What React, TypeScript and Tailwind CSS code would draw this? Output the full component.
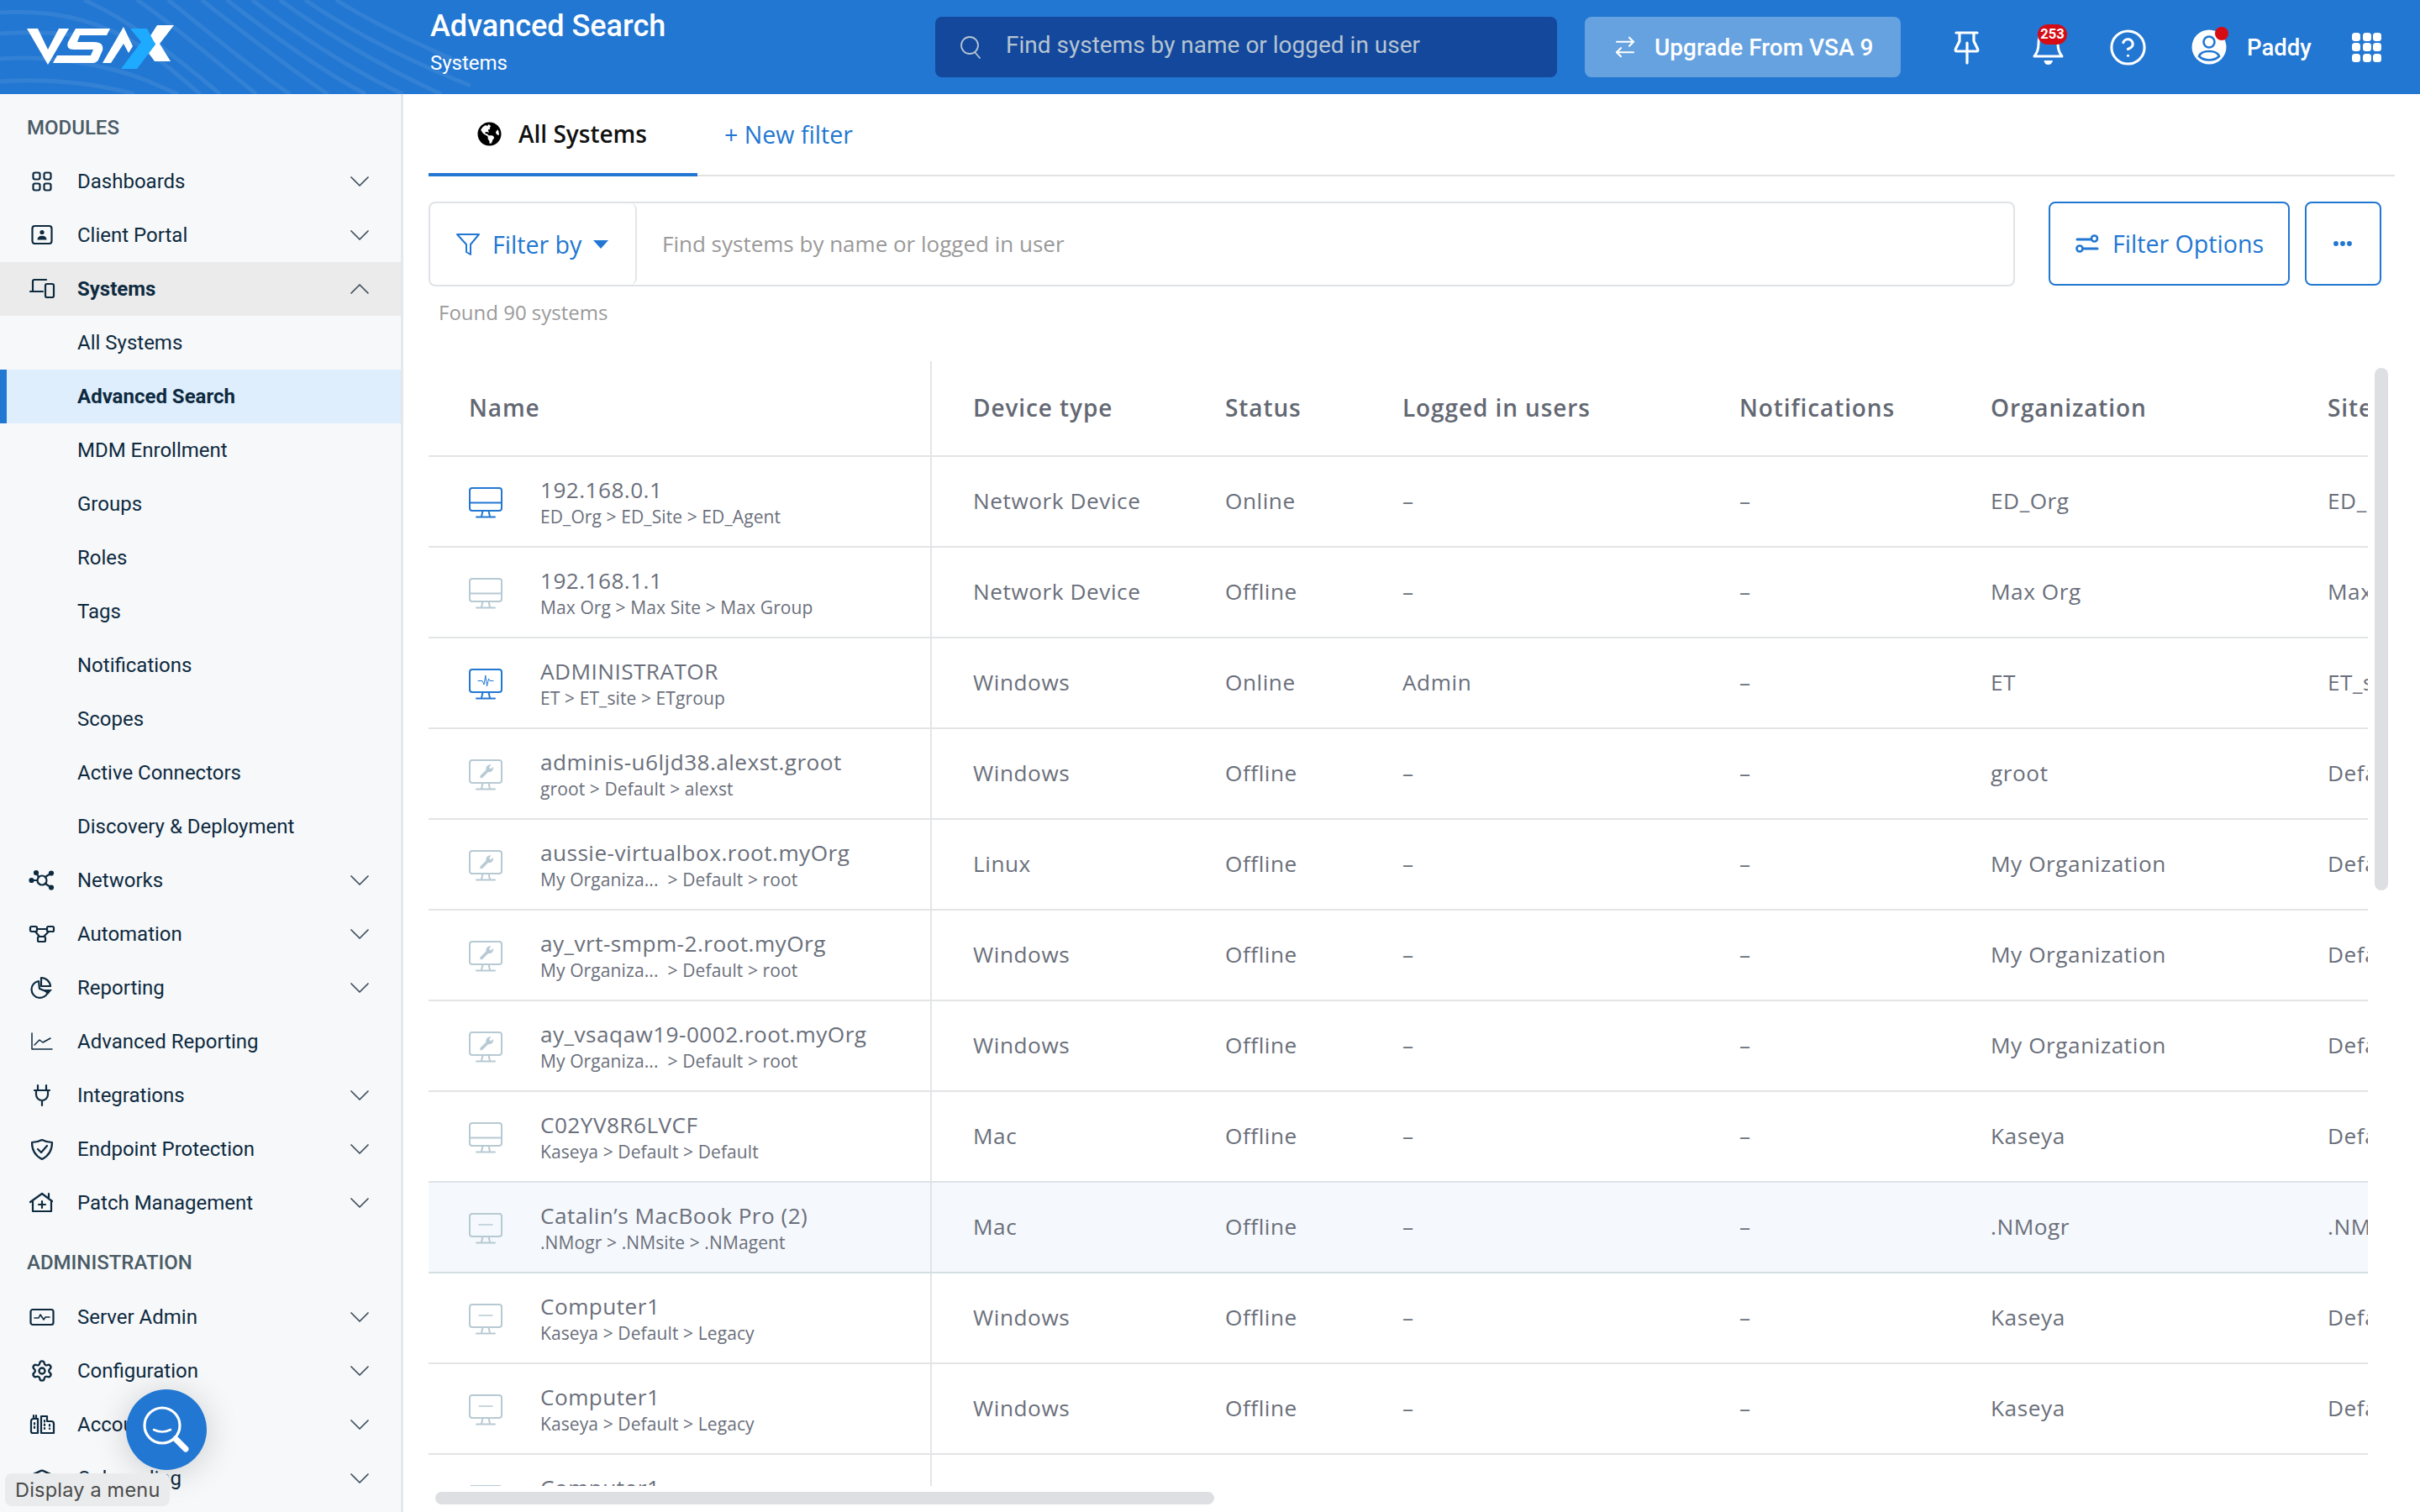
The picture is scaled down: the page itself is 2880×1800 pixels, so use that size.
import React from "react";
import { ArrowRightLeft, CircleHelp, Settings, GraduationCap } from "lucide-react";
import { FaGlobeAmericas } from "react-icons/fa";

function Logo() {
  return (
    <svg className="absolute left-0 top-0" width="560" height="112" viewBox="0 0 560 112" fill="none">
      <g stroke="#ffffff" strokeOpacity="0.08" strokeWidth="5" fill="none">
        <path d="M0 15 C60 11 115 22 167 55 C195 74 215 92 238 112" />
        <path d="M0 40 C30 38 60 38 90 42" />
        <path d="M0 70 C60 66 125 76 175 96 C190 103 200 107 212 112" />
        <path d="M0 97 C50 93 110 98 160 112" />
        <path d="M100 0 C150 22 200 60 262 112" />
        <path d="M163 0 C205 28 255 72 305 112" />
        <path d="M200 0 C245 35 290 75 345 112" />
        <path d="M240 0 C285 35 335 75 390 112" />
        <path d="M270 0 C315 35 375 80 435 112" />
        <path d="M300 0 C350 38 420 85 480 112" />
        <path d="M333 0 C385 38 455 80 525 112" />
        <path d="M363 0 C415 35 485 72 560 102" />
        <path d="M400 0 C440 25 490 50 560 80" />
      </g>
      <g fill="#ffffff">
        <path d="M32 34 H45 L57 59 L70 34 H82 L57 77 Z" />
        <path d="M90 34 H131 L127 42 H95 L92 50 H112 Q124 50 122 60 L118 69 Q116 75 110 75 H63 L68 66 H108 L111 59 H88 Q78 59 81 50 Z" />
        <path d="M122 75 L147 32 L158 55 L153 63 L147 52 L132 75 Z" />
        <path d="M187 30 H207 L190 52 L203 73 H184 L176 62 L185 52 L178 44 Z" />
      </g>
      <path d="M155 34 H175 L185 53 L163 82 H144 L168 50 Z" fill="#1eaaff" />
    </svg>
  );
}

function Ic({ children, fill = "none" }: { children: React.ReactNode; fill?: string }) {
  return (
    <svg width="32" height="32" viewBox="0 0 32 32" fill={fill} stroke="#0e2a3f" strokeWidth="2.2" strokeLinecap="round" strokeLinejoin="round">
      {children}
    </svg>
  );
}

const icons: Record<string, React.ReactNode> = {
  dash: (
    <Ic>
      <rect x="5.5" y="5.5" width="8" height="8" rx="2.2" />
      <rect x="18.5" y="5.5" width="8" height="8" rx="2.2" />
      <rect x="5.5" y="18.5" width="8" height="8" rx="2.2" />
      <rect x="18.5" y="18.5" width="8" height="8" rx="2.2" />
    </Ic>
  ),
  client: (
    <Ic>
      <rect x="4.5" y="5" width="23" height="21" rx="3" />
      <circle cx="16" cy="12.5" r="2.6" fill="#0e2a3f" stroke="none" />
      <path d="M10.5 21.5 Q10.5 16.8 16 16.8 Q21.5 16.8 21.5 21.5 Z" fill="#0e2a3f" stroke="none" />
    </Ic>
  ),
  systems: (
    <Ic>
      <path d="M21 5 H7 Q5 5 5 7 V19 M2 19 H17" />
      <rect x="20" y="10" width="10" height="16" rx="2" />
    </Ic>
  ),
  networks: (
    <Ic>
      <circle cx="16" cy="16" r="5.5" />
      <path d="M5 16 H10.5 M12 12 L9 7 M20 12 L26 8 M20 20 L26 24" />
      <circle cx="3.5" cy="16" r="2" fill="#0e2a3f" />
      <circle cx="9" cy="7" r="2" fill="#0e2a3f" />
      <circle cx="27" cy="7.5" r="2" fill="#0e2a3f" />
      <circle cx="27" cy="24.5" r="2" fill="#0e2a3f" />
    </Ic>
  ),
  auto: (
    <Ic>
      <rect x="2" y="7" width="8" height="6" rx="1.5" />
      <rect x="22" y="7" width="8" height="6" rx="1.5" />
      <rect x="11" y="19" width="9" height="6" rx="1.5" />
      <path d="M10 10 H22 M8 13 L13 19 M24 13 L18 19" />
    </Ic>
  ),
  report: (
    <Ic>
      <path d="M12 8 A10 10 0 1 0 23 21 L13 17 Z" />
      <path d="M15 4 A11 11 0 0 1 26 14 H15 Z" />
      <path d="M17 18 H28 L23 24 Z" fill="#0e2a3f" stroke="none" />
    </Ic>
  ),
  adv: (
    <svg width="32" height="32" viewBox="0 0 32 32" fill="none" stroke="#0e2a3f" strokeWidth="1.5" strokeLinecap="round" strokeLinejoin="round">
      <path d="M4 6 V25 H28 M7 20 L13 14 L17 17 L26 12" />
    </svg>
  ),
  integ: (
    <Ic>
      <path d="M11 4 V9 M21 4 V9 M7 10 H25 M9 10 V15 A7 7 0 0 0 23 15 V10 M16 22 V28" />
    </Ic>
  ),
  endpoint: (
    <Ic>
      <path d="M16 5 Q22 8 28 8 Q28 22 16 28 Q4 22 4 8 Q10 8 16 5 Z" />
      <path d="M11 16 L15 20 L22 12" />
    </Ic>
  ),
  patch: (
    <Ic>
      <path d="M2 15 L16 5 L28 14 M5 14 V26 H27 V14 M24 5 V11" />
      <path d="M12 18 H20 M16 14 V22" />
    </Ic>
  ),
  server: (
    <Ic>
      <rect x="2.5" y="7" width="27" height="18" rx="2.5" />
      <path d="M7 17 H12 L14 13 L18 19 L20 16 H25" strokeWidth="1.6" />
    </Ic>
  ),
  config: <Settings size={28} color="#0e2a3f" strokeWidth={2} />,
  accounts: (
    <Ic>
      <path d="M3 12 Q3 9 6 9 H11 V26 H5 Q3 26 3 24 Z M6 5 V9 M9 5 V9" />
      <path d="M15 6 H22 V12 H27 Q30 12 30 15 V26 H15 Z" />
      <path d="M7 14 V21 M19 11 V21 M25 16 V21" strokeDasharray="1.5 3" />
    </Ic>
  ),
  onboard: <GraduationCap size={32} color="#0e2a3f" strokeWidth={1.8} />,
};

function Chevron({ up }: { up?: boolean }) {
  return (
    <svg className="ml-auto mr-[38px] shrink-0" width="22" height="12" viewBox="0 0 22 12" fill="none" stroke="#3f4f5c" strokeWidth="1.7" strokeLinecap="round" strokeLinejoin="round">
      <path d={up ? "M1 11 L11 1 L21 11" : "M1 1 L11 11 L21 1"} />
    </svg>
  );
}

function NavItem({ label, icon, chevron, up }: { label: string; icon: string; chevron?: boolean; up?: boolean }) {
  return (
    <div className={`flex h-16 items-center pl-[34px] text-[24px] text-[#0e2a3f] ${up ? "bg-[#ebebeb] font-bold" : ""}`}>
      <span className="flex h-8 w-8 shrink-0 items-center justify-center">{icons[icon]}</span>
      <span className="ml-[26px] whitespace-nowrap">{label}</span>
      {chevron ? <Chevron up={up} /> : null}
    </div>
  );
}

function SubItem({ label, active }: { label: string; active?: boolean }) {
  return (
    <div className={`flex h-16 items-center text-[24px] text-[#0e2a3f] ${active ? "border-l-[8px] border-[#2277d2] bg-[#deeefc] pl-[84px] font-bold" : "pl-[92px]"}`}>
      {label}
    </div>
  );
}

function Monitor({ kind, on }: { kind: string; on?: boolean }) {
  const c = on ? "#2277d2" : "#b7cad3";
  return (
    <svg className="mt-[3px]" width="40" height="38" viewBox="0 0 40 38" fill="none" stroke={c} strokeWidth="2" strokeLinecap="round" strokeLinejoin="round">
      <rect x="1" y="1" width="38" height="27" rx="3" />
      <path d="M16.5 28 L15 35 M23.5 28 L25 35 M9 35.5 H31" />
      {kind === "net" ? <path d="M1 18.5 H39" /> : null}
      {kind === "dash" ? <path d="M12 14 H28" strokeWidth="1.4" /> : null}
      {kind === "pulse" ? <path d="M11 14.5 H16 L18 19 L19.8 8 L21.5 21 L23.5 12 L25 14.5 H29" strokeWidth="1" /> : null}
      {kind === "wrench" ? (
        <path d="M26.5 6.5 A5 5 0 0 0 20.5 12.5 L13.5 19.5 A1.8 1.8 0 0 0 16 22 L23 15 A5 5 0 0 0 29 9 L26 11.5 L24 9.5 Z" fill={c} stroke="none" />
      ) : null}
    </svg>
  );
}

type Row = { n: string; p: string; d: string; s: string; u: string; o: string; site: string; k: string; on?: boolean; hover?: boolean; before?: boolean };

const rows: Row[] = [
  { n: "192.168.0.1", p: "ED_Org > ED_Site > ED_Agent", d: "Network Device", s: "Online", u: "–", o: "ED_Org", site: "ED_Site", k: "net", on: true },
  { n: "192.168.1.1", p: "Max Org > Max Site > Max Group", d: "Network Device", s: "Offline", u: "–", o: "Max Org", site: "Max Site", k: "net" },
  { n: "ADMINISTRATOR", p: "ET > ET_site > ETgroup", d: "Windows", s: "Online", u: "Admin", o: "ET", site: "ET_site", k: "pulse", on: true },
  { n: "adminis-u6ljd38.alexst.groot", p: "groot > Default > alexst", d: "Windows", s: "Offline", u: "–", o: "groot", site: "Default", k: "wrench" },
  { n: "aussie-virtualbox.root.myOrg", p: "My Organiza...  > Default > root", d: "Linux", s: "Offline", u: "–", o: "My Organization", site: "Default", k: "wrench" },
  { n: "ay_vrt-smpm-2.root.myOrg", p: "My Organiza...  > Default > root", d: "Windows", s: "Offline", u: "–", o: "My Organization", site: "Default", k: "wrench" },
  { n: "ay_vsaqaw19-0002.root.myOrg", p: "My Organiza...  > Default > root", d: "Windows", s: "Offline", u: "–", o: "My Organization", site: "Default", k: "wrench" },
  { n: "C02YV8R6LVCF", p: "Kaseya > Default > Default", d: "Mac", s: "Offline", u: "–", o: "Kaseya", site: "Default", k: "net", before: true },
  { n: "Catalin’s MacBook Pro (2)", p: ".NMogr > .NMsite > .NMagent", d: "Mac", s: "Offline", u: "–", o: ".NMogr", site: ".NMsite", k: "dash", hover: true },
  { n: "Computer1", p: "Kaseya > Default > Legacy", d: "Windows", s: "Offline", u: "–", o: "Kaseya", site: "Default", k: "dash" },
  { n: "Computer1", p: "Kaseya > Default > Legacy", d: "Windows", s: "Offline", u: "–", o: "Kaseya", site: "Default", k: "dash" },
  { n: "Computer1", p: "Kaseya > Default > Legacy", d: "Windows", s: "Offline", u: "–", o: "Kaseya", site: "Default", k: "dash" },
];

const gridCols = "grid-cols-[599px_349px_211px_401px_299px_401px_200px]";

function TableRow({ r }: { r: Row }) {
  return (
    <div className={`grid h-[108px] w-[2460px] ${gridCols} items-stretch border-b-2 text-[26.2px] tracking-[0.55px] text-[#6a6f7b] ${r.hover ? "border-[#d3dfe3] bg-[#f5f8fc]" : r.before ? "border-[#dde3e6]" : "border-[#e3e4e6]"}`}>
      <div className="flex items-center border-r-2 border-[#e3e4e6] pl-[48px]">
        <Monitor kind={r.k} on={r.on} />
        <div className="ml-[45px] mt-[4px] whitespace-nowrap">
          <div className="h-[32px] leading-[32px] tracking-[0.45px]">{r.n}</div>
          <div className="h-[32px] text-[21px] leading-[32px] tracking-[0.1px] whitespace-pre">{r.p}</div>
        </div>
      </div>
      <div className="flex items-center pl-[49px]">{r.d}</div>
      <div className="flex items-center">{r.s}</div>
      <div className="flex items-center">{r.u}</div>
      <div className="flex items-center">–</div>
      <div className="flex items-center">{r.o}</div>
      <div className="flex items-center whitespace-nowrap">{r.site}</div>
    </div>
  );
}

export default function App() {
  return (
    <div className="relative flex h-[1800px] w-[2880px] flex-col overflow-hidden bg-white [font-family:Roboto,sans-serif]">
      <header className="relative flex h-[112px] shrink-0 items-center bg-[#2277d2] text-white">
        <Logo />
        <div className="relative ml-[512px] w-[601px] shrink-0 self-start pt-[9px]">
          <div className="text-[36px] font-medium leading-[44px]">Advanced Search</div>
          <div className="mt-[7px] text-[24px] leading-[30px]">Systems</div>
        </div>
        <div className="relative flex h-[72px] w-[740px] shrink-0 items-center rounded-[8px] bg-[#13489c] pl-[30px] text-[#b6c4d2]">
          <svg width="24" height="28" viewBox="0 0 24 28" fill="none" stroke="#b6c4d2" strokeWidth="1.8" strokeLinecap="round">
            <circle cx="11" cy="12" r="10" />
            <path d="M17 20 L23 27" />
          </svg>
          <span className="ml-[30px] -mt-[4px] text-[28px]">Find systems by name or logged in user</span>
        </div>
        <div className="relative ml-[33px] flex h-[72px] w-[376px] shrink-0 items-center rounded-[8px] bg-[#66a2e0] pl-[33px]">
          <ArrowRightLeft size={30} strokeWidth={1.7} color="#ffffff" />
          <span className="ml-[20px] mt-[2px] text-[28px] font-medium whitespace-nowrap">Upgrade From VSA 9</span>
        </div>
        <div className="relative ml-[55px] h-12 w-12 shrink-0">
          <svg width="48" height="48" viewBox="0 0 48 48" fill="none" stroke="#ffffff" strokeWidth="3.2" strokeLinecap="round" strokeLinejoin="round">
            <path d="M11 7 H36 M15 7 V17 L11 25 Q9 29 12 29 H35 Q38 29 36 25 L32 17 V7 M24 19 V43" />
          </svg>
        </div>
        <div className="relative ml-[48px] h-12 w-12 shrink-0">
          <svg width="48" height="48" viewBox="0 0 48 48" fill="none" stroke="#ffffff" strokeWidth="3" strokeLinejoin="round">
            <path d="M8 35 Q13 29 13 20 Q13 6 24.5 6 Q36 6 36 20 Q36 29 41 35 Z" />
            <path d="M19.5 40 H30 Q29 45 24.5 45 Q20 45 19.5 40 Z" fill="#ffffff" stroke="none" />
          </svg>
          <span className="absolute left-[12px] top-[-3px] flex h-[24px] w-[35px] items-center justify-center rounded-full bg-[#d60b14] text-[16.5px] font-bold">253</span>
        </div>
        <div className="relative ml-[47px] flex h-12 w-12 shrink-0 items-center justify-center">
          <CircleHelp size={47} strokeWidth={1.55} color="#ffffff" />
        </div>
        <div className="relative ml-[49px] flex h-12 w-12 shrink-0 items-center justify-center">
          <svg width="42" height="42" viewBox="0 0 42 42" fill="none">
            <circle cx="21" cy="21" r="20.5" fill="#ffffff" />
            <circle cx="21" cy="15" r="6.5" fill="#ffffff" stroke="#2277d2" strokeWidth="2.6" />
            <path d="M9 32 C12 24 30 24 33 32 C27 38 15 38 9 32 Z" fill="#ffffff" stroke="#2277d2" strokeWidth="2.6" />
          </svg>
          <span className="absolute left-[31px] top-0 h-[16px] w-[16px] rounded-full bg-[#d60b14]" />
        </div>
        <span className="relative ml-[21px] mt-[2px] w-[78px] shrink-0 text-[27.5px] font-medium">Paddy</span>
        <div className="relative ml-[47px] grid shrink-0 grid-cols-3 gap-[2.5px]">
          {Array.from({ length: 9 }).map((_, i) => (
            <span key={i} className="h-[10px] w-[10px] rounded-[3.5px] bg-white" />
          ))}
        </div>
      </header>

      <div className="flex min-h-0 flex-1">
        <aside className="w-[480px] shrink-0 overflow-hidden border-r-[3px] border-[#e4e7eb] bg-[#f6f8fa]">
          <div className="flex h-[72px] items-center pl-[32px] pt-[8px] text-[24px] font-medium text-[#4a5b66]">MODULES</div>
          <NavItem label="Dashboards" icon="dash" chevron />
          <NavItem label="Client Portal" icon="client" chevron />
          <NavItem label="Systems" icon="systems" chevron up />
          <SubItem label="All Systems" />
          <SubItem label="Advanced Search" active />
          <SubItem label="MDM Enrollment" />
          <SubItem label="Groups" />
          <SubItem label="Roles" />
          <SubItem label="Tags" />
          <SubItem label="Notifications" />
          <SubItem label="Scopes" />
          <SubItem label="Active Connectors" />
          <SubItem label="Discovery & Deployment" />
          <NavItem label="Networks" icon="networks" chevron />
          <NavItem label="Automation" icon="auto" chevron />
          <NavItem label="Reporting" icon="report" chevron />
          <NavItem label="Advanced Reporting" icon="adv" />
          <NavItem label="Integrations" icon="integ" chevron />
          <NavItem label="Endpoint Protection" icon="endpoint" chevron />
          <NavItem label="Patch Management" icon="patch" chevron />
          <div className="flex h-[72px] items-center pl-[32px] pt-[6px] text-[24px] font-medium text-[#4a5b66]">ADMINISTRATION</div>
          <NavItem label="Server Admin" icon="server" chevron />
          <NavItem label="Configuration" icon="config" chevron />
          <NavItem label="Accounts" icon="accounts" chevron />
          <NavItem label="Onboarding" icon="onboard" chevron />
        </aside>

        <main className="min-w-0 flex-1 pl-[30px] [font-family:'Open_Sans',sans-serif]">
          <div className="mr-[30px] flex h-[98px] items-stretch border-b-2 border-[#e2e2e2]">
            <div className="flex h-[98px] w-[320px] items-center border-b-4 border-[#2277d2] pl-[58px]">
              <FaGlobeAmericas size={29} color="#000000" />
              <span className="ml-[20px] text-[28px] font-semibold text-[#111111]">All Systems</span>
            </div>
            <div className="ml-[32px] flex items-center text-[28.6px] font-medium text-[#2277d2]">+ New filter</div>
          </div>

          <div className="mt-[30px] flex h-[101px] items-stretch">
            <div className="flex w-[1888px] items-stretch rounded-[8px] border-2 border-[#dfe2e6]">
              <div className="flex w-[246px] items-center rounded-[8px] border-r-2 border-[#e3e5e9] pl-[30px] text-[#2277d2]">
                <svg width="30" height="30" viewBox="0 0 30 30" fill="none" stroke="#2277d2" strokeWidth="2" strokeLinejoin="round">
                  <path d="M2 3 H28 L18 15 V27 L13 24 V15 Z" />
                </svg>
                <span className="ml-[14px] mt-[2px] text-[28.6px] font-medium">Filter by</span>
                <svg className="ml-[13px]" width="20" height="12" viewBox="0 0 20 12" fill="#2277d2">
                  <path d="M1 1 H19 L10 11 Z" />
                </svg>
              </div>
              <div className="flex items-center pl-[30px] text-[26px] text-[#999999]">Find systems by name or logged in user</div>
            </div>
            <div className="ml-[40px] flex h-[100px] w-[287px] items-center rounded-[8px] border-2 border-[#2277d2] pl-[30px] text-[#2277d2]">
              <svg width="28" height="22" viewBox="0 0 28 22" fill="none" stroke="#2277d2" strokeWidth="3" strokeLinecap="round">
                <path d="M2 6 H18 M10 17 H26" />
                <circle cx="22.5" cy="5" r="3.5" strokeWidth="2.6" />
                <circle cx="5" cy="17" r="3.5" strokeWidth="2.6" />
              </svg>
              <span className="ml-[16px] text-[28.6px] font-medium">Filter Options</span>
            </div>
            <div className="ml-[18px] flex h-[100px] w-[91px] items-center justify-center rounded-[8px] border-2 border-[#2277d2] pr-[2px]">
              <svg width="24" height="8" viewBox="0 0 24 8" fill="#2277d2">
                <circle cx="4" cy="4" r="2.9" />
                <circle cx="12" cy="4" r="2.9" />
                <circle cx="20" cy="4" r="2.9" />
              </svg>
            </div>
          </div>

          <div className="ml-[12px] mt-[11px] h-[40px] text-[24px] leading-[40px] text-[#9a9a9a]">Found 90 systems</div>

          <div className="mt-[38px] flex gap-[8px]">
            <div className="h-[1339px] w-[2308px] overflow-hidden">
              <div className={`grid h-[114px] w-[2460px] ${gridCols} items-stretch border-b-2 border-[#e3e4e6] pb-[2px] text-[28px] font-semibold tracking-[0.9px] text-[#636873]`}>
                <div className="-mb-[2px] flex items-center border-r-2 border-[#e3e4e6] pb-[2px] pl-[48px]">Name</div>
                <div className="flex items-center pl-[49px]">Device type</div>
                <div className="flex items-center">Status</div>
                <div className="flex items-center">Logged in users</div>
                <div className="flex items-center">Notifications</div>
                <div className="flex items-center">Organization</div>
                <div className="flex items-center">Site</div>
              </div>
              {rows.map((r, i) => (
                <TableRow key={i} r={r} />
              ))}
            </div>
            <div className="mt-[8px] h-[622px] w-[16px] rounded-full bg-[#dddfe2]" />
          </div>
          <div className="ml-[8px] mt-[7px] h-[15px] w-[927px] rounded-full bg-[#dddfe2]" />
        </main>
      </div>

      <div className="absolute left-[150px] top-[1654px] flex h-[96px] w-[96px] items-center justify-center rounded-full bg-[#2277d2] shadow-[0_4px_40px_rgba(0,0,0,0.18)]">
        <svg width="58" height="58" viewBox="0 0 58 58" fill="none" stroke="#ffffff" strokeLinecap="round">
          <circle cx="24" cy="24" r="21" strokeWidth="3.2" />
          <path d="M14 29 Q24 34 34 29" strokeWidth="2.6" />
          <path d="M40 40 L52 52" strokeWidth="7" />
        </svg>
      </div>
      <div className="absolute left-[6px] top-[1754px] flex h-[39px] w-[196px] items-center rounded-[8px] bg-[#e9ebec] pl-[12px] text-[23.5px] tracking-[0.2px] text-[#4a4a4a] [font-family:Inter,sans-serif]">Display a menu</div>
    </div>
  );
}
